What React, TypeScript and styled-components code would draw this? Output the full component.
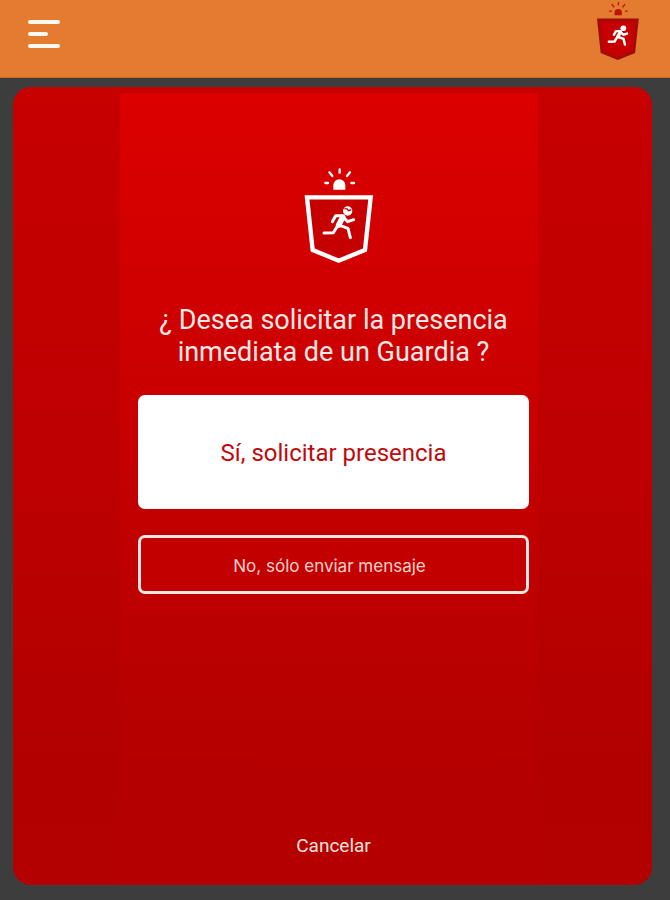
import React from "react";
import styled, { createGlobalStyle } from "styled-components";

const GlobalStyle = createGlobalStyle`
  *, *::before, *::after { box-sizing: border-box; }
  body {
    margin: 0;
    background: #3d3d3d;
    font-family: Roboto, "Liberation Sans", sans-serif;
  }
  button { font-family: inherit; cursor: pointer; }
`;

const Screen = styled.div`
  display: flex;
  flex-direction: column;
  min-height: 100vh;
`;

const Header = styled.header`
  display: flex;
  align-items: flex-start;
  justify-content: space-between;
  height: 78px;
  padding: 1px 30px 0 28px;
  background: #e37b30;
  border-bottom: 1px solid #c46a2c;
`;

const MenuButton = styled.button`
  display: flex;
  flex-direction: column;
  gap: 8px;
  margin: 19px 0 0;
  padding: 0;
  border: 0;
  background: none;
`;

const MenuBar = styled.span<{ $short?: boolean }>`
  width: ${(p) => (p.$short ? 20 : 32)}px;
  height: 4px;
  border-radius: 2px;
  background: #fff8f0;
`;

const Main = styled.main`
  display: flex;
  flex: 1;
  padding: 9px 18px 15px 13px;
`;

const Card = styled.section`
  display: grid;
  grid-template-columns: 107fr 418fr 114fr;
  flex: 1;
  border-radius: 18px;
  background: linear-gradient(#c70000, #bd0000 50%, #b20000 85%, #b30000);
  overflow: hidden;
`;

const Column = styled.div`
  grid-column: 2;
  display: flex;
  flex-direction: column;
  align-items: center;
  margin-top: 6px;
  padding: 74px 9px 24px 18px;
  background: linear-gradient(#dc0000, #d00000 25%, #c20000 53%, #b60000 80%, #b40000);
`;

const EmblemRow = styled.div`
  display: flex;
  padding-left: 10px;
`;

const Title = styled.h1`
  margin: 40px 0 27px;
  color: #ffe9e6;
  font-size: 27px;
  font-weight: 400;
  line-height: 32px;
  text-align: center;
`;

const ActionButton = styled.button<{ $primary?: boolean }>`
  width: 100%;
  height: ${(p) => (p.$primary ? 114 : 59)}px;
  padding: ${(p) => (p.$primary ? "2px 0 0" : "2px 8px 0 0")};
  border: 3px solid ${(p) => (p.$primary ? "#fff" : "#ffe6e3")};
  border-radius: 7px;
  background: ${(p) => (p.$primary ? "#fff" : "#c20000")};
  color: ${(p) => (p.$primary ? "#c0090b" : "#ffd0cc")};
  font-family: ${(p) => (p.$primary ? "Roboto" : "Inter")}, sans-serif;
  font-size: ${(p) => (p.$primary ? 24 : 17)}px;

  & + & { margin-top: 26px; }
`;

const CancelButton = styled.button`
  height: 32px;
  margin-top: auto;
  padding: 0 8px;
  border: 0;
  background: none;
  color: #ffe0dc;
  font-size: 19px;
`;

type EmblemProps = {
  width: number;
  height: number;
  outline: string;
  fill: string;
  siren: string;
  helmet?: boolean;
};

function Emblem({ width, height, outline, fill, siren, helmet }: EmblemProps) {
  const limb = helmet ? 9 : 12;
  return (
    <svg width={width} height={height} viewBox="68 36 216 291" aria-hidden="true">
      <path d="M159 104V91a18 18 0 0 1 36 0v13z" fill={siren} />
      <path
        d="M178 43v10M147 52l9 11M209 52l-9 11M135 84h8M213 84h8"
        stroke={siren}
        strokeWidth="7"
        strokeLinecap="round"
      />
      <path
        d="M80 127H271L254 285L175 317L97 285Z"
        fill={fill}
        stroke={outline}
        strokeWidth="13"
      />
      <g
        stroke="#fff"
        strokeWidth={limb}
        fill="none"
        strokeLinecap="round"
        strokeLinejoin="round"
      >
        <path d="M156 200l10-18h20" />
        <path d="M187 187l-12 23" strokeWidth="17" />
        <path d="M191 188l11 12 18-6" />
        <path d="M178 211l25 9 7 28" />
        <path d="M172 212l-13 21-28 1" />
      </g>
      <circle cx="202" cy="168" r="14" fill="#fff" />
      {helmet && (
        <path
          d="M194 161l7 1 3 5 7-2"
          fill="none"
          stroke={fill}
          strokeWidth="4"
          strokeLinecap="round"
        />
      )}
    </svg>
  );
}

export default function App() {
  return (
    <>
      <GlobalStyle />
      <Screen>
        <Header>
          <MenuButton type="button" aria-label="Menú">
            <MenuBar />
            <MenuBar $short />
            <MenuBar />
          </MenuButton>
          <Emblem width={44} height={60} outline="#a00c08" fill="#c60000" siren="#bd1408" />
        </Header>
        <Main>
          <Card>
            <Column>
              <EmblemRow>
                <Emblem width={72} height={97} outline="#fff" fill="#c60000" siren="#fff" helmet />
              </EmblemRow>
              <Title>
                ¿ Desea solicitar la presencia
                <br />
                inmediata de un Guardia ?
              </Title>
              <ActionButton type="button" $primary>
                Sí, solicitar presencia
              </ActionButton>
              <ActionButton type="button">No, sólo enviar mensaje</ActionButton>
              <CancelButton type="button">Cancelar</CancelButton>
            </Column>
          </Card>
        </Main>
      </Screen>
    </>
  );
}
